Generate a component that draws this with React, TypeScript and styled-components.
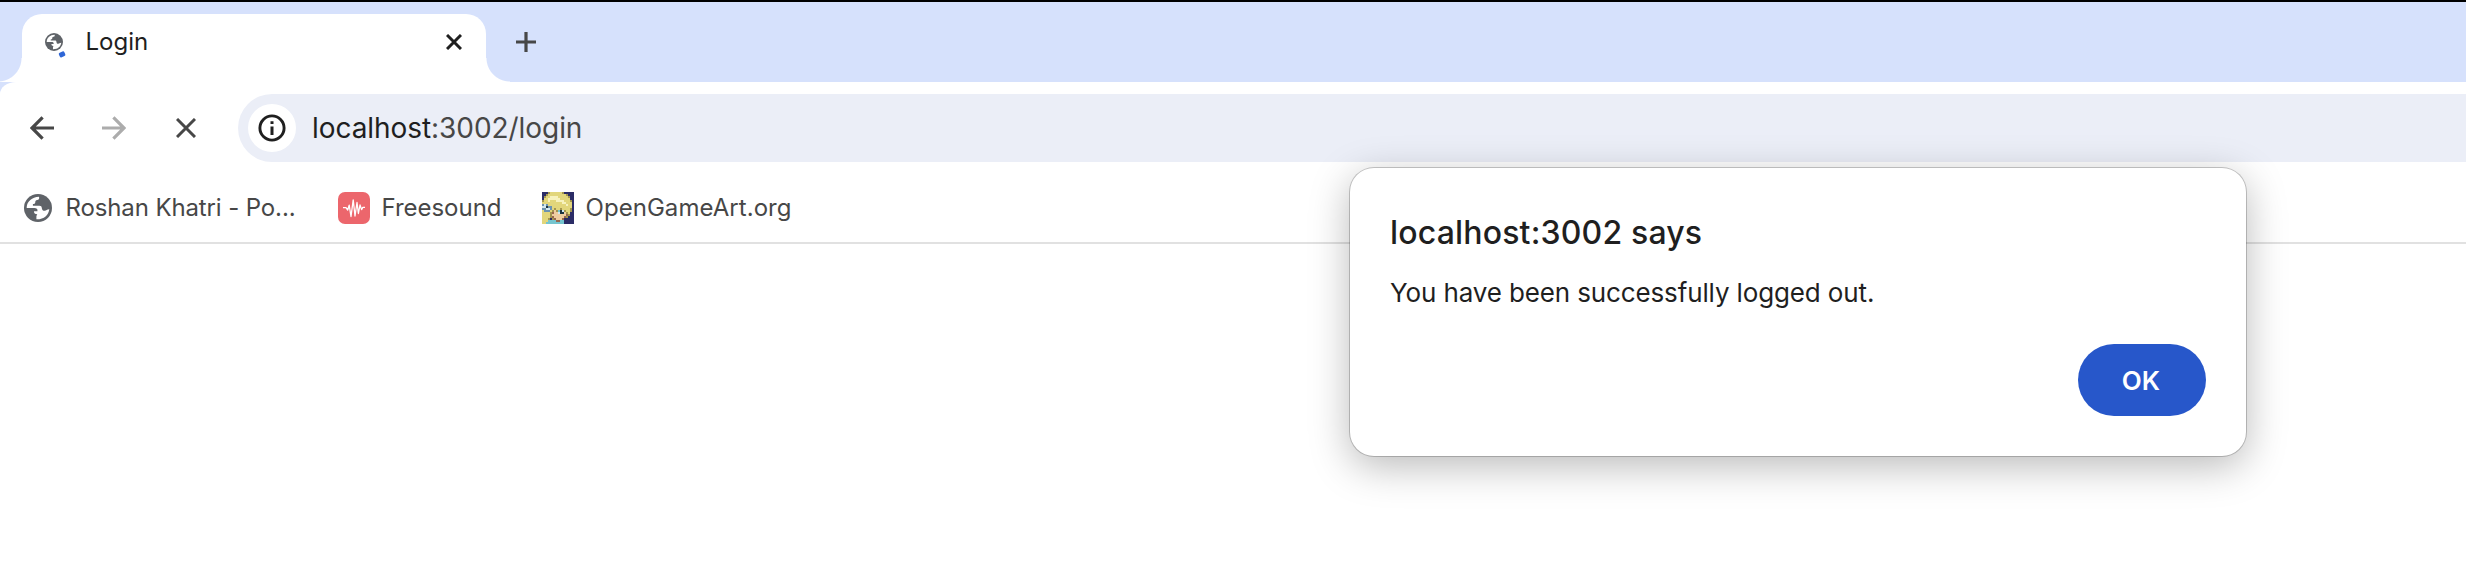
import React from "react";
import styled, { createGlobalStyle } from "styled-components";

const STRIP = "#d6e1fc";

const GlobalStyle = createGlobalStyle`
  * { box-sizing: border-box; }
  body { margin: 0; background: #ffffff; overflow: hidden; }
`;

const BrowserWindow = styled.div`
  position: relative;
  display: flex;
  flex-direction: column;
  width: 100%;
  height: 586px;
  overflow: hidden;
  background: #ffffff;
  color: #1f1f1f;
  font-family: Inter, "Liberation Sans", sans-serif;
`;

const TabStrip = styled.header`
  display: flex;
  align-items: flex-end;
  flex: none;
  height: 82px;
  padding-left: 22px;
  border-top: 2px solid #000000;
  background: ${STRIP};
`;

const Tab = styled.div`
  position: relative;
  display: flex;
  align-items: flex-start;
  width: 464px;
  height: 68px;
  padding: 12px 16px 0 23px;
  border-radius: 20px 20px 0 0;
  background: #ffffff;

  &::before,
  &::after {
    content: "";
    position: absolute;
    bottom: 0;
    width: 24px;
    height: 24px;
  }
  &::before {
    left: -24px;
    background: radial-gradient(circle at 0 0, transparent 23px, #ffffff 24px);
  }
  &::after {
    right: -24px;
    background: radial-gradient(circle at 100% 0, transparent 23px, #ffffff 24px);
  }
`;

const TabTitle = styled.span`
  flex: 1;
  padding-left: 22.5px;
  font-size: 24px;
  line-height: 32px;
`;

const IconButton = styled.button<{ $size: number; $color?: string }>`
  display: flex;
  align-items: center;
  justify-content: center;
  flex: none;
  width: ${(p) => p.$size}px;
  height: ${(p) => p.$size}px;
  padding: 0;
  border: 0;
  background: none;
  color: ${(p) => p.$color ?? "#474747"};
`;

const NewTabSlot = styled.div`
  padding: 0 0 24px 24px;
`;

const ToolbarBackdrop = styled.div`
  flex: none;
  background: ${STRIP};
`;

const Toolbar = styled.nav`
  display: flex;
  align-items: flex-start;
  height: 90px;
  padding: 12px 0 0 8px;
  border-top-left-radius: 16px 12px;
  background: #ffffff;
`;

const NavButtons = styled.div`
  display: flex;
  align-items: center;
  gap: 4px;
  width: 230px;
  height: 68px;
`;

const AddressBar = styled.div`
  display: flex;
  align-items: center;
  flex: 1;
  height: 68px;
  padding-left: 10px;
  border-radius: 34px 0 0 34px;
  background: #ebeef7;
`;

const SiteInfo = styled.span`
  display: flex;
  align-items: center;
  justify-content: center;
  width: 48px;
  height: 48px;
  border-radius: 50%;
  background: #ffffff;
`;

const Url = styled.span`
  padding-left: 16px;
  font-size: 28px;
  line-height: 40px;
  letter-spacing: -0.06px;
  color: #474747;
  white-space: nowrap;
`;

const Host = styled.span`
  color: #1f1f1f;
`;

const Bookmarks = styled.div`
  display: flex;
  align-items: flex-start;
  flex: none;
  height: 72px;
  padding: 20px 0 0 24px;
  border-bottom: 2px solid #e1e1e1;
`;

const Bookmark = styled.a<{ $width: number; $gap: number; $tracking: number }>`
  display: flex;
  align-items: center;
  flex: none;
  gap: ${(p) => p.$gap}px;
  width: ${(p) => p.$width}px;
  height: 32px;
  font-size: 24px;
  font-weight: 430;
  line-height: 32px;
  letter-spacing: ${(p) => p.$tracking}px;
  color: #474747;
  white-space: nowrap;
`;

const Dialog = styled.section`
  position: absolute;
  top: 168px;
  left: 1350px;
  display: flex;
  flex-direction: column;
  width: 896px;
  height: 288px;
  padding: 44px 40px 40px;
  border-radius: 24px;
  background: #ffffff;
  box-shadow: 0 0 0 1px rgba(0, 0, 0, 0.2), 0 10px 40px rgba(0, 0, 0, 0.28);
`;

const DialogTitle = styled.h1`
  margin: 0;
  font-size: 32px;
  font-weight: 500;
  line-height: 41px;
  letter-spacing: 0.17px;
`;

const DialogMessage = styled.p`
  margin: 20px 0 0;
  font-size: 26px;
  line-height: 40px;
  letter-spacing: -0.13px;
`;

const ConfirmButton = styled.button`
  align-self: flex-end;
  width: 128px;
  height: 72px;
  margin-top: auto;
  padding: 1px 2px 0 0;
  border: 0;
  border-radius: 36px;
  background: #2757ca;
  color: #ffffff;
  font: 600 26px/40px Inter, "Liberation Sans", sans-serif;
`;

const Globe = ({ size }: { size: number }) => (
  <svg width={size} height={size} viewBox="0 0 28 28">
    <circle cx="14" cy="14" r="14" fill="#5f6368" />
    <path
      fill="#fff"
      d="M2.7 13C3.2 7.4 7.8 3 15 2.7C15.6 4.4 14.9 5.7 13.2 6C11.8 6.2 11.2 7 11.3 8.2C11.3 9.5 10.2 10 8.9 10V11.8H15.4C17 11.8 17.7 12.6 17.8 14C18 16 19 16.8 20.6 16.8C22.4 16.8 22.8 15.2 25.3 15.2C24.6 21 20 25.5 12.4 25.3V22.4C12.4 21.2 13.2 20.9 13.2 20.2C11 20.2 9.8 19 10 17.2H13.4C14 14.8 12.4 14 10.4 14H2.7Z"
    />
  </svg>
);

const TabIcon = styled.span`
  position: relative;
  display: flex;
  align-items: center;
  width: 18px;
  height: 32px;
`;

const LoadingMark = styled.i`
  position: absolute;
  right: -1.5px;
  bottom: 2px;
  width: 5.5px;
  height: 4.5px;
  border-radius: 1.5px;
  background: #2f66d6;
  transform: rotate(-25deg);
`;

const Cross = ({ size, stroke }: { size: number; stroke: number }) => (
  <svg width={size} height={size} viewBox={`0 0 ${size} ${size}`} stroke="currentColor" strokeWidth={stroke}>
    <path d={`M1 1L${size - 1} ${size - 1}M${size - 1} 1L1 ${size - 1}`} />
  </svg>
);

const Plus = () => (
  <svg width="20" height="20" stroke="currentColor" strokeWidth="3.2">
    <path d="M10 0V20M0 10H20" />
  </svg>
);

const Arrow = ({ forward }: { forward?: boolean }) => (
  <svg width="24" height="24" fill="none" stroke="currentColor" strokeWidth="3.2">
    <path d={forward ? "M0 12H22M11.4 1.4L22 12L11.4 22.6" : "M24 12H2M12.6 1.4L2 12L12.6 22.6"} />
  </svg>
);

const Info = () => (
  <svg width="28" height="28" fill="none" stroke="#1f1f1f">
    <circle cx="14" cy="14" r="12.1" strokeWidth="2.9" />
    <path d="M14 12.6V21M14 7.2V10" strokeWidth="3" />
  </svg>
);

const Waveform = () => (
  <svg width="32" height="32">
    <rect width="32" height="32" rx="7" fill="#ec666c" />
    <path
      d="M5 15.6H8L9.7 18L11.2 13.2L13 24.5L15.2 7.8L17 24L19 10.5L20.4 21.5L22 13L23.6 17.6L24.8 15.4H27"
      fill="none"
      stroke="#fff"
      strokeWidth="1.3"
      strokeLinejoin="round"
    />
  </svg>
);

const PALETTE: Record<string, string> = {
  N: "#2b2c66",
  Y: "#e2d67b",
  L: "#f7f2bd",
  D: "#a3964f",
  S: "#efcda0",
  B: "#97684f",
  W: "#d3e8ee",
  C: "#6c93b0",
  E: "#1c3340",
  T: "#76c5cf",
};

const PORTRAIT = [
  "NNNDYYYYYYDNNNNN",
  "NNDYYYYYYYYYDNNN",
  "NDYYLLLLYYYYYDNN",
  "NYYLLLLLLYYYYYNN",
  "DYYLYYYLLLLYYYDN",
  "YYYYYYYYYYLLYYYN",
  "CWCYYYYYYYYYLYYN",
  "WWECCYYYYYYYYYYN",
  "CCWWCYDYYDYYYYDN",
  "YCCCYDSDTEWDYYDN",
  "YYYYDBSSWEESDYNN",
  "YYYYDSSSSSSSBDNN",
  "YYYYDBSSSSSBDNNN",
  "YYYDNDBSSSBNNNNN",
  "YYYTTTTBBTTNNNNN",
  "YYTTTTTTTTTNNNNN",
];

const Portrait = () => (
  <svg width="32" height="32" viewBox="0 0 16 16" shapeRendering="crispEdges">
    {PORTRAIT.flatMap((row, y) =>
      [...row].map((c, x) => <rect key={`${x}-${y}`} x={x} y={y} width="1" height="1" fill={PALETTE[c]} />)
    )}
  </svg>
);

export default function App() {
  return (
    <BrowserWindow>
      <GlobalStyle />
      <TabStrip>
        <Tab>
          <TabIcon>
            <Globe size={18} />
            <LoadingMark />
          </TabIcon>
          <TabTitle>Login</TabTitle>
          <IconButton $size={32} $color="#1f1f1f" aria-label="Close tab">
            <Cross size={16} stroke={3} />
          </IconButton>
        </Tab>
        <NewTabSlot>
          <IconButton $size={32} aria-label="New tab">
            <Plus />
          </IconButton>
        </NewTabSlot>
      </TabStrip>
      <ToolbarBackdrop>
        <Toolbar>
          <NavButtons>
            <IconButton $size={68} aria-label="Back">
              <Arrow />
            </IconButton>
            <IconButton $size={68} $color="#acacac" aria-label="Forward">
              <Arrow forward />
            </IconButton>
            <IconButton $size={68} aria-label="Stop loading">
              <Cross size={20} stroke={3} />
            </IconButton>
          </NavButtons>
          <AddressBar>
            <SiteInfo>
              <Info />
            </SiteInfo>
            <Url>
              <Host>localhost</Host>:3002/login
            </Url>
          </AddressBar>
        </Toolbar>
      </ToolbarBackdrop>
      <Bookmarks>
        <Bookmark $width={314} $gap={13.5} $tracking={-0.12}>
          <Globe size={28} />
          Roshan Khatri - Po...
        </Bookmark>
        <Bookmark $width={204} $gap={11.5} $tracking={-0.03}>
          <Waveform />
          Freesound
        </Bookmark>
        <Bookmark $width={260} $gap={11.5} $tracking={0.05}>
          <Portrait />
          OpenGameArt.org
        </Bookmark>
      </Bookmarks>
      <Dialog role="alertdialog">
        <DialogTitle>localhost:3002 says</DialogTitle>
        <DialogMessage>You have been successfully logged out.</DialogMessage>
        <ConfirmButton>OK</ConfirmButton>
      </Dialog>
    </BrowserWindow>
  );
}
